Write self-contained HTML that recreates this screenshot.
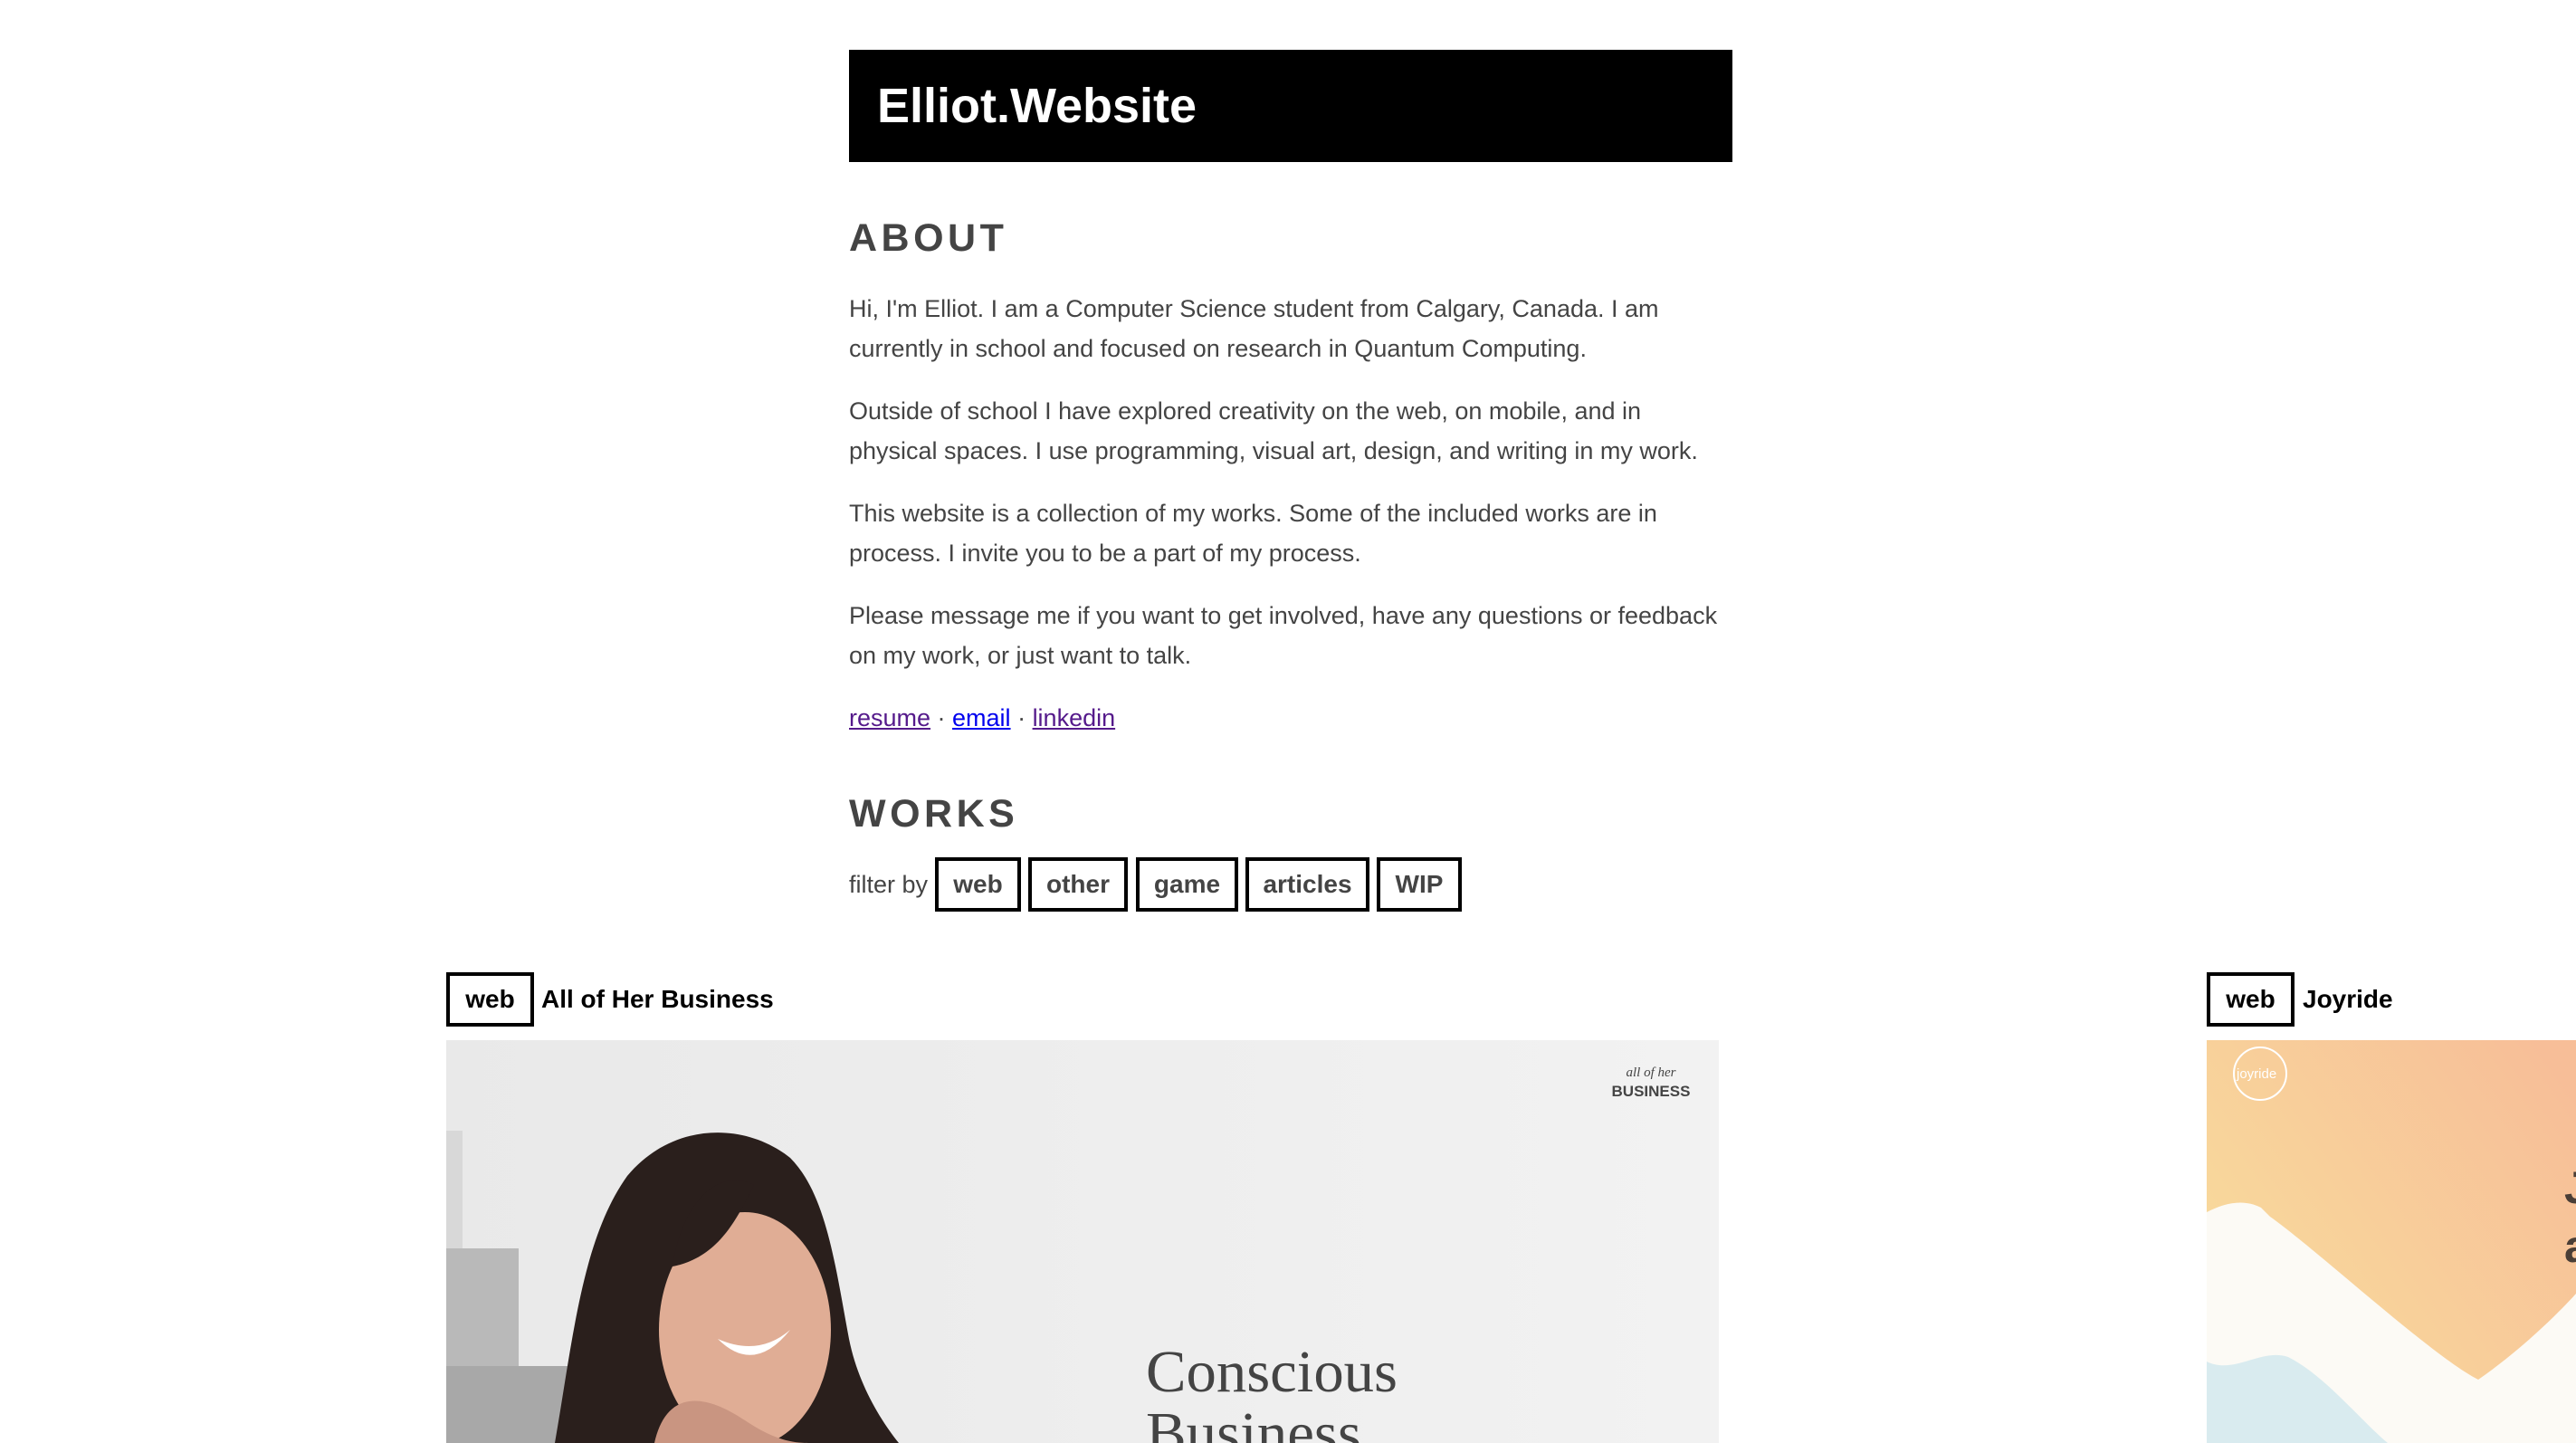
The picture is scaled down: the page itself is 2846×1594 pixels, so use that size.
<!DOCTYPE html>
<html><head><meta charset="utf-8"><style>
*{margin:0;padding:0;box-sizing:border-box}
body{width:2846px;height:1594px;overflow:hidden;background:#fff;font-family:"Liberation Sans",Arial,sans-serif;position:relative}
.hdr{position:absolute;left:938px;top:55px;width:976px;height:124px;background:#000;color:#fff;font-weight:bold;font-size:54px;line-height:124px;padding-left:31px}
h2{position:absolute;left:938px;font-size:43px;font-weight:bold;color:#444;letter-spacing:4.5px;line-height:50px}
.txt{position:absolute;left:938px;top:319px;font-size:27px;line-height:44px;color:#444;white-space:nowrap}
.txt p{margin-bottom:25px}
a.v{color:#551a8b}a.b{color:#0000ee}
.fl{position:absolute;left:938px;top:947px;height:60px;font-size:27px;color:#444;line-height:60px}
.btn{position:absolute;top:947px;height:60px;border:4px solid #000;font-weight:bold;font-size:28px;color:#444;text-align:center;line-height:52px}
.tag{position:absolute;top:1074px;height:60px;width:97px;border:4px solid #000;font-weight:bold;font-size:28px;color:#000;text-align:center;line-height:52px}
.ttl{position:absolute;top:1074px;line-height:60px;font-weight:bold;font-size:28px;color:#000}
</style></head><body>
<div class="hdr">Elliot.Website</div>
<h2 style="top:238px">ABOUT</h2>
<div class="txt">
<p>Hi, I'm Elliot. I am a Computer Science student from Calgary, Canada. I am<br>currently in school and focused on research in Quantum Computing.</p>
<p>Outside of school I have explored creativity on the web, on mobile, and in<br>physical spaces. I use programming, visual art, design, and writing in my work.</p>
<p>This website is a collection of my works. Some of the included works are in<br>process. I invite you to be a part of my process.</p>
<p>Please message me if you want to get involved, have any questions or feedback<br>on my work, or just want to talk.</p>
<p><a class="v" href="#">resume</a> · <a class="b" href="#">email</a> · <a class="v" href="#">linkedin</a></p>
</div>
<h2 style="top:874px">WORKS</h2>
<div class="fl">filter by</div>
<div class="btn" style="left:1033px;width:95px">web</div>
<div class="btn" style="left:1136px;width:110px">other</div>
<div class="btn" style="left:1255px;width:113px">game</div>
<div class="btn" style="left:1376px;width:137px">articles</div>
<div class="btn" style="left:1521px;width:94px">WIP</div>

<div class="tag" style="left:493px">web</div>
<div class="ttl" style="left:598px">All of Her Business</div>
<svg style="position:absolute;left:493px;top:1149px" width="1406" height="445" viewBox="0 0 1406 445">
<defs><linearGradient id="bg1" x1="0" x2="1"><stop offset="0" stop-color="#e9e9e9"/><stop offset="1" stop-color="#f2f2f2"/></linearGradient></defs>
<rect width="1406" height="445" fill="url(#bg1)"/>
<rect x="0" y="100" width="18" height="345" fill="#d8d8d8"/>
<rect x="0" y="230" width="80" height="215" fill="#b9b9b9"/>
<rect x="0" y="360" width="140" height="85" fill="#a8a8a8"/>
<path d="M120 445 C140 330 150 220 200 150 C250 90 330 90 380 130 C420 170 430 250 445 330 C455 380 480 420 500 445 Z" fill="#2a1f1c"/>
<ellipse cx="330" cy="320" rx="95" ry="130" fill="#e0ad95"/>
<path d="M250 250 C260 180 300 140 340 160 C320 200 300 240 250 250 Z" fill="#2a1f1c"/>
<path d="M300 330 Q340 370 380 320 Q345 350 300 330 Z" fill="#fff"/>
<path d="M230 445 C240 400 270 380 330 420 C360 440 380 445 400 445 Z" fill="#c99581"/>
<text x="773" y="388" font-family="Liberation Serif,serif" font-size="66" fill="#444" textLength="278" lengthAdjust="spacingAndGlyphs">Conscious</text>
<text x="773" y="456" font-family="Liberation Serif,serif" font-size="66" fill="#444" textLength="238" lengthAdjust="spacingAndGlyphs">Business</text>
<text x="1331" y="40" text-anchor="middle" font-family="Liberation Serif,serif" font-style="italic" font-size="15" fill="#444">all of her</text>
<text x="1331" y="62" text-anchor="middle" font-family="Liberation Sans,sans-serif" font-weight="bold" font-size="17" fill="#444">BUSINESS</text>
</svg>

<div class="tag" style="left:2438px">web</div>
<div class="ttl" style="left:2544px">Joyride</div>
<svg style="position:absolute;left:2438px;top:1149px" width="408" height="445" viewBox="0 0 408 445">
<defs><linearGradient id="g2" x1="0" y1="0.7" x2="0.9" y2="0"><stop offset="0" stop-color="#f8dc9c"/><stop offset="1" stop-color="#f7be98"/></linearGradient></defs>
<rect width="408" height="445" fill="url(#g2)"/>
<path d="M0 190 C20 180 40 175 60 185 L70 195 C120 230 250 350 300 375 C350 340 390 300 408 280 L408 445 L0 445 Z" fill="#fcfaf5"/>
<path d="M0 355 C30 370 60 340 90 350 C130 370 170 420 200 445 L0 445 Z" fill="#d9ebef"/>
<circle cx="59" cy="37" r="29" fill="none" stroke="#fff" stroke-width="2"/>
<text x="33" y="42" font-family="Liberation Sans,sans-serif" font-size="15" fill="#fff">joyride</text>
<text x="395" y="180" font-family="Liberation Sans,sans-serif" font-weight="bold" font-size="50" fill="#4a3e36">J</text>
<text x="395" y="245" font-family="Liberation Sans,sans-serif" font-weight="bold" font-size="50" fill="#4a3e36">a</text>
</svg>
</body></html>
